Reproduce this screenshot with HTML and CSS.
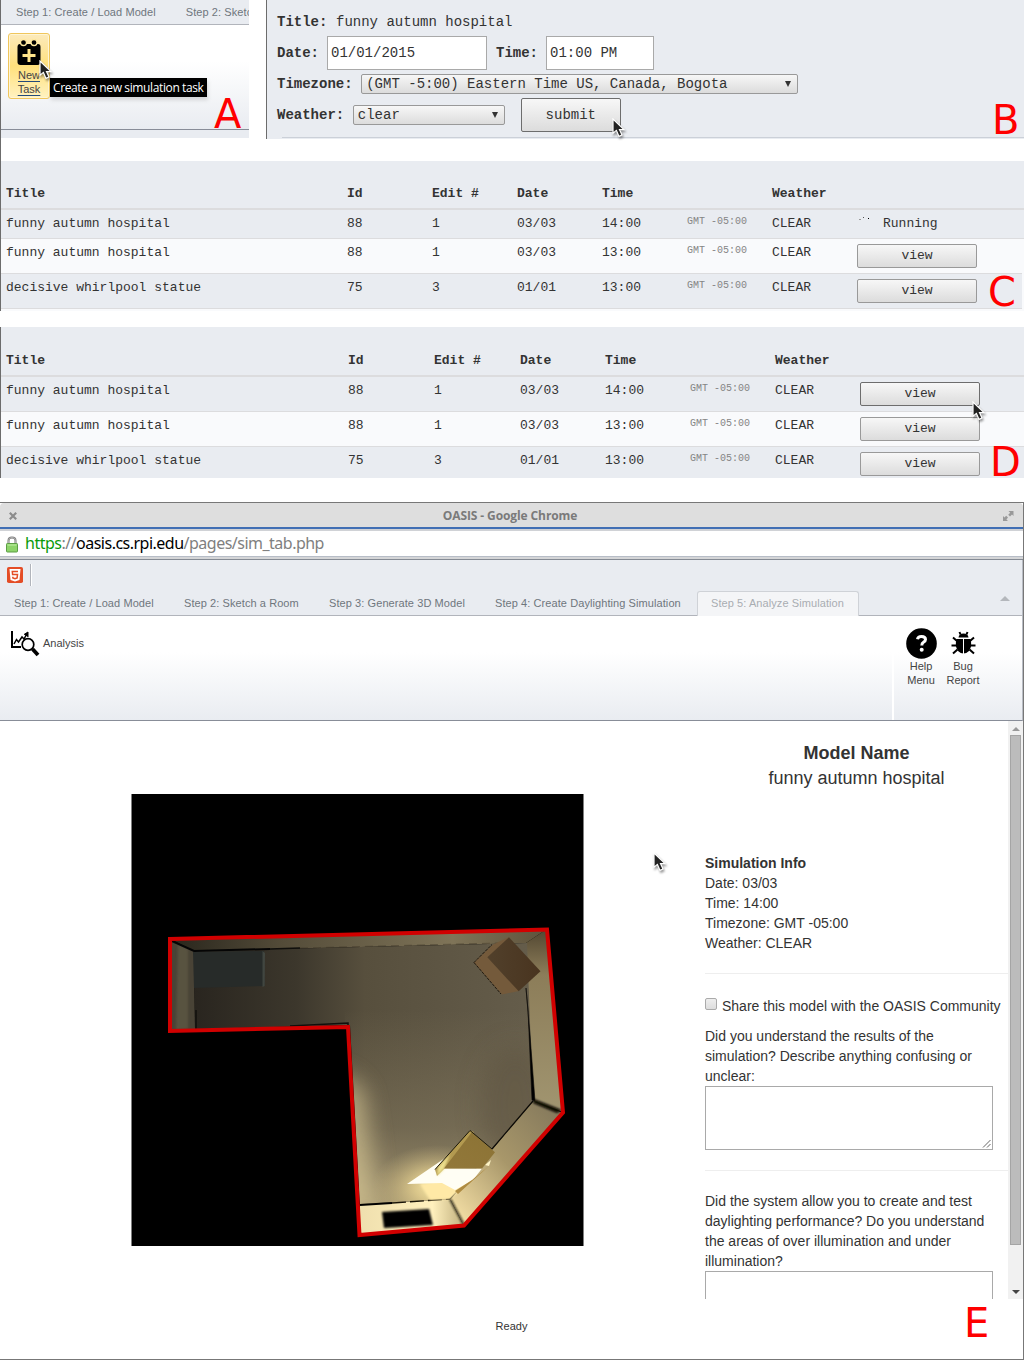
FILE: index.html
```html
<!DOCTYPE html>
<html lang="en">
<head>
<meta charset="utf-8">
<title>OASIS - Daylighting Simulation</title>
<link rel="stylesheet" href="styles.css">
</head>
<body>
<svg width="0" height="0" class="defs">
  <symbol id="cursor" viewBox="0 0 16 22">
    <path d="M1 1V15.2L4.4 12.4L7 18.4L10 17L7.5 11.6H12Z" fill="#222" stroke="#fff" stroke-width="1.2"/>
  </symbol>
</svg>

<div class="top">
  <section class="panel-a">
    <nav class="tabs-a"><span>Step 1: Create / Load Model</span><span>Step 2: Sketch a Room</span></nav>
    <div class="ribbon-a">
      <a class="new-task">
        <svg width="24" height="27" viewBox="0 0 24 27"><path d="M3 5H21Q23.500 5 23.500 8V23Q23.500 26 20.500 26H3.500Q.5 26 .5 23V8Q.5 5 3 5Z"/><g stroke="#ffe9a0" fill="#000" stroke-width="1.300"><circle cx="6.500" cy="3.500" r="3"/><circle cx="17" cy="3.500" r="3"/></g><path d="M12 10V23M5.500 16.500H18.500" stroke="#ffe48a" stroke-width="3"/></svg>
        <span>New</span><span>Task</span>
      </a>
      <div class="tooltip">Create a new simulation task</div>
    </div>
    <b class="letter la">A</b>
    <svg class="cursor c1"><use href="#cursor"/></svg>
  </section>

  <section class="panel-b">
    <div class="field f1"><b>Title:</b><span>funny autumn hospital</span></div>
    <div class="field f2"><b>Date:</b><span class="input date">01/01/2015</span><b class="time-label">Time:</b><span class="input time">01:00 PM</span></div>
    <div class="field f3"><b>Timezone:</b><span class="select tz">(GMT -5:00) Eastern Time US, Canada, Bogota<i></i></span></div>
    <div class="field f4"><b>Weather:</b><span class="select wx">clear<i></i></span><span class="btn submit">submit</span></div>
    <hr>
    <b class="letter lb">B</b>
    <svg class="cursor c2"><use href="#cursor"/></svg>
  </section>
</div>

<section class="tasks tasks-c">
  <div class="row head"><span>Title</span><span>Id</span><span>Edit #</span><span>Date</span><span>Time</span><span></span><span>Weather</span></div>
  <div class="row short"><span>funny autumn hospital</span><span>88</span><span>1</span><span>03/03</span><span>14:00</span><small>GMT -05:00</small><span>CLEAR</span><span class="running"><svg width="12" height="6" viewBox="0 0 12 6"><path d="M2 3.500h2" stroke="#999"/><path d="M6 1.500h1" stroke="#555"/><path d="M11 2.500h1" stroke="#000"/></svg>Running</span></div>
  <div class="row alt"><span>funny autumn hospital</span><span>88</span><span>1</span><span>03/03</span><span>13:00</span><small>GMT -05:00</small><span>CLEAR</span><span class="btn">view</span></div>
  <div class="row"><span>decisive whirlpool statue</span><span>75</span><span>3</span><span>01/01</span><span>13:00</span><small>GMT -05:00</small><span>CLEAR</span><span class="btn">view</span></div>
  <b class="letter lc">C</b>
</section>

<section class="tasks tasks-d">
  <div class="row head"><span>Title</span><span>Id</span><span>Edit #</span><span>Date</span><span>Time</span><span></span><span>Weather</span></div>
  <div class="row"><span>funny autumn hospital</span><span>88</span><span>1</span><span>03/03</span><span>14:00</span><small>GMT -05:00</small><span>CLEAR</span><span class="btn hover">view</span></div>
  <div class="row alt"><span>funny autumn hospital</span><span>88</span><span>1</span><span>03/03</span><span>13:00</span><small>GMT -05:00</small><span>CLEAR</span><span class="btn">view</span></div>
  <div class="row last"><span>decisive whirlpool statue</span><span>75</span><span>3</span><span>01/01</span><span>13:00</span><small>GMT -05:00</small><span>CLEAR</span><span class="btn">view</span></div>
  <b class="letter ld">D</b>
  <svg class="cursor c3"><use href="#cursor"/></svg>
</section>

<section class="window">
  <header class="titlebar">
    <svg width="8" height="8" viewBox="0 0 8 8"><path d="M.8.8L7.200 7.200M7.200.8L.8 7.200" stroke="#8c8c8c" stroke-width="2.200"/></svg>
    <b>OASIS - Google Chrome</b>
    <svg width="11" height="10" viewBox="0 0 11 10" fill="#999"><path d="M5.500 0H10.500V5L9 3.500L7 5.500L5.200 3.700L7.200 1.700Z"/><path d="M5 10H0V5L1.500 6.500L3.200 4.800L5 6.600L3.400 8.400Z"/></svg>
  </header>
  <div class="address">
    <svg width="12" height="17" viewBox="0 0 12 17"><path d="M2.500 8V4.500Q2.500 1.500 6 1.500T9.500 4.500V8" fill="none" stroke="#777" stroke-width="2"/><path d="M2.500 8V4.500Q2.500 1.500 6 1.500T9.500 4.500V8" fill="none" stroke="#ccc" stroke-width=".7"/><rect x=".5" y="7.500" width="11" height="8.500" rx=".8" fill="#8dd469" stroke="#5b9d45"/><path d="M1.500 9H10.500" stroke="#c0efa5"/></svg>
    <div class="url"><span class="secure">https</span>://<span class="host">oasis.cs.rpi.edu</span>/pages/sim_tab.php</div>
  </div>
  <div class="toolbar">
    <div class="quick">
      <svg width="16" height="16" viewBox="0 0 16 16"><rect width="16" height="16" rx="1.800" fill="#e44d26"/><path d="M2.500 2H13.500L12.500 13L8 14.500L3.500 13Z" fill="#fff"/><path d="M11 4.500H5.300L5.600 7.600H10.500L10.100 11L8 11.700L5.900 11L5.800 9.700" fill="none" stroke="#e44d26" stroke-width="1.500"/></svg>
      <i></i>
    </div>
    <nav class="tabs"><span>Step 1: Create / Load Model</span><span>Step 2: Sketch a Room</span><span>Step 3: Generate 3D Model</span><span>Step 4: Create Daylighting Simulation</span><span class="active">Step 5: Analyze Simulation</span><i></i></nav>
  </div>
  <div class="ribbon">
    <div class="analysis">
      <svg width="30" height="28" viewBox="0 0 30 28" fill="none" stroke="#000"><path d="M2 1V17H11" stroke-width="2"/><path d="M4 14L6.500 9.500L8.500 12L12 7L14 9L17 3.500" stroke-width="1.500"/><path d="M14 4.500L18 2V7" fill="#000" stroke-width="1"/><circle cx="18" cy="14.500" r="5.800" stroke-width="1.700" fill="#fff"/><path d="M22.500 19L28 25" stroke-width="3.800"/></svg>
      <span>Analysis</span>
    </div>
    <div class="tools">
      <div class="tool"><svg width="32" height="32" viewBox="0 0 32 32"><circle cx="16.500" cy="16.500" r="15.300"/><path d="M12.500 12.200Q13 9.500 16.500 9.500Q20.500 9.500 20.500 12.500Q20.500 14.200 18.500 15.200Q16.800 16.200 16.800 18.500" fill="none" stroke="#fff" stroke-width="3"/><circle cx="16.700" cy="22.800" r="2" fill="#fff"/></svg><span>Help</span><span>Menu</span></div>
      <div class="tool bug"><svg width="32" height="32" viewBox="0 0 32 32"><path d="M11.500 10.500Q12 6.500 16.500 6.500T21.500 10.500Z"/><path d="M9.500 12H23.500Q25.500 19 22 24Q16.500 29 11 24Q7.500 19 9.500 12Z"/><path d="M13.500 7.500L12.500 5M19.500 7.500L20.500 5M10 14L6 10.500M23 14L27 10.500M10.500 18.500H4.500M22.500 18.500H28.500M10.500 22.500L6 26.500M22.500 22.500L27 26.500" stroke="#000" stroke-width="2"/><path d="M16.500 12V27.500" stroke="#fff"/></svg><span>Bug</span><span>Report</span></div>
    </div>
  </div>
  <div class="content">
    <div class="stage">
      <svg class="render" width="453" height="452" viewBox="131 794 453 452">
        <defs>
          <linearGradient id="floorX" gradientUnits="userSpaceOnUse" x1="194" y1="0" x2="535" y2="0"><stop offset="0" stop-color="#29251f"/><stop offset=".3" stop-color="#3c372c"/><stop offset=".5" stop-color="#574f3d"/><stop offset="1" stop-color="#655d4b"/></linearGradient>
          <linearGradient id="floorY" gradientUnits="userSpaceOnUse" x1="0" y1="1010" x2="0" y2="1205"><stop offset="0" stop-color="#857a5f" stop-opacity="0"/><stop offset=".6" stop-color="#857a5f" stop-opacity=".55"/><stop offset="1" stop-color="#a39570"/></linearGradient>
          <linearGradient id="topWall"><stop offset="0" stop-color="#28251c"/><stop offset=".3" stop-color="#544c39"/><stop offset=".75" stop-color="#7f7458"/><stop offset="1" stop-color="#5d523b"/></linearGradient>
          <linearGradient id="rightWall" x2="0" y2="1"><stop offset="0" stop-color="#514631"/><stop offset=".25" stop-color="#8c7d59"/><stop offset="1" stop-color="#a19570"/></linearGradient>
          <linearGradient id="lowWall" x1="1" y1="0" x2="0" y2="1"><stop offset="0" stop-color="#80755a"/><stop offset=".5" stop-color="#a8976a"/><stop offset="1" stop-color="#ffe9ad"/></linearGradient>
          <linearGradient id="bottomWall"><stop offset="0" stop-color="#efdfae"/><stop offset=".7" stop-color="#fff0bd"/><stop offset="1" stop-color="#bfae7c"/></linearGradient>
          <linearGradient id="boxTop" x1="0" x2="1"><stop offset="0" stop-color="#51402b"/><stop offset="1" stop-color="#49341f"/></linearGradient>
          <linearGradient id="boxLow" x1="0" y1="1" x2="1" y2="0"><stop offset="0" stop-color="#92783a"/><stop offset="1" stop-color="#8c7335"/></linearGradient>
          <radialGradient id="glow"><stop offset="0" stop-color="#fff0ae"/><stop offset=".35" stop-color="#eed894" stop-opacity=".75"/><stop offset="1" stop-color="#c9b67e" stop-opacity="0"/></radialGradient>
          <filter id="soft"><feGaussianBlur stdDeviation="1.300"/></filter>
          <filter id="softer" x="-80%" y="-80%" width="260%" height="260%"><feGaussianBlur stdDeviation="12"/></filter>
          <clipPath id="floorClip"><path d="M194 951L527 943L533 1101L450 1199L360 1204L350 1025L195 1029Z"/></clipPath>
        </defs>
        <rect x="131.500" y="794" width="452" height="452"/>
        <path d="M170 939L547 929L526 943L194 951Z" fill="url(#topWall)"/>
        <path d="M171 940L194 951L195 1029L171 1031Z" fill="#494336"/>
        <path d="M178 944L188 949V1029L176 1030Z" fill="#595240" filter="url(#soft)"/>
        <path d="M526 943L547 929L563 1112L533 1101Z" fill="url(#rightWall)"/>
        <path d="M533 1101L563 1113L464 1226L450 1199Z" fill="url(#lowWall)"/>
        <path d="M360 1204L450 1199L464 1226L359 1235Z" fill="url(#bottomWall)"/>
        <g clip-path="url(#floorClip)">
          <rect x="190" y="940" width="350" height="270" fill="url(#floorX)"/>
          <rect x="345" y="1010" width="195" height="200" fill="url(#floorY)"/>
          <path d="M335 1070L362 1090L378 1215H335Z" fill="#d2c292" opacity=".8" filter="url(#softer)"/>
          <ellipse cx="515" cy="1105" rx="35" ry="60" fill="#5e5542" opacity=".6" filter="url(#softer)"/>
          <ellipse cx="437" cy="1187" rx="65" ry="42" fill="url(#glow)"/>
        </g>
        <path d="M172 941L194 951L270 949" fill="none" stroke="#050505" stroke-width="2"/>
        <path d="M270 949L300 948M290 1026L348 1023V1027M196 1010V1029" fill="none" stroke="#100f0c" stroke-width="1.500"/>
        <path d="M300 948L500 943" stroke="#3c3527" stroke-width=".5" stroke-dasharray="8 5"/>
        <path d="M193 952L264 951L264.500 986L194 988Z" fill="#272b29"/>
        <path d="M262.500 951L265 953L264.700 986L262.500 987Z" fill="#414640"/>
        <path d="M526 988L528 1010L532 1100L535 1101L530 1035Z" stroke="#080705" stroke-width=".6"/>
        <path d="M533 1101L492 1149M456 1192L450 1199" fill="none" stroke="#0c0a06" stroke-width="1.200"/>
        <path d="M534 1099L562 1110L557 1113L533 1103Z" fill="#080704" filter="url(#soft)"/>
        <path d="M360 1205L392 1203" stroke="#000" stroke-width="2"/>
        <path d="M392 1203L450 1199" stroke="#191407" stroke-width="1.300" stroke-dasharray="14 4"/>
        <path d="M450 1199L464 1225" stroke="#252113" stroke-width="2" filter="url(#soft)"/>
        <path d="M474 962.500L493 944.500L509 937L519 991L502 994.500Z" fill="#745a3b"/>
        <path d="M509 937.300L540.500 971.300L518.700 991.300L487.300 957.300Z" fill="url(#boxTop)"/>
        <path d="M474 962.500L492 944.500M474 962.500L501 994" stroke="#20180e" stroke-width="1" stroke-dasharray="3 1"/>
        <path d="M420 1184L474 1178L450 1199L430 1200Z" fill="#ffe9a6" filter="url(#soft)"/>
        <path d="M407 1184L448 1156L444 1168.500H482L473 1180L455 1190L442 1183Z" fill="#fffef4"/>
        <path d="M472 1180L489 1166L458 1194L455 1191Z" fill="#ae8b42"/>
        <path d="M485 1165L491 1160L489 1166Z" fill="#fff5c7"/>
        <path d="M470 1130.500L474 1132L444 1169L437 1176L435 1169.500Z" fill="#b39a50"/>
        <path d="M438 1167L450 1154L444 1169L437 1176Z" fill="#eee190" filter="url(#soft)"/>
        <path d="M472 1132L495 1152.300L482 1168.500H444Z" fill="url(#boxLow)"/>
        <path d="M435 1169.500L470 1130.500L492 1149" fill="none" stroke="#1c1809" stroke-width="1"/>
        <path d="M382 1212L429 1209L433 1225L384 1228Z" filter="url(#soft)"/>
        <path d="M170 939L547 929.500L563 1112.500L464 1225.500L359.500 1235L348 1027L170 1031Z" fill="none" stroke="#d10000" stroke-width="4"/>
      </svg>
    </div>
    <div class="info">
      <div class="model"><b>Model Name</b><span>funny autumn hospital</span></div>
      <div class="sim"><b>Simulation Info</b><span>Date: 03/03</span><span>Time: 14:00</span><span>Timezone: GMT -05:00</span><span>Weather: CLEAR</span></div>
      <div class="share"><i></i><span>Share this model with the OASIS Community</span></div>
      <p>Did you understand the results of the<br>simulation? Describe anything confusing or<br>unclear:</p>
      <div class="textarea"><svg width="9" height="9" viewBox="0 0 9 9"><path d="M1 8.500L8.500 1M5 8.500L8.500 5" stroke="#666"/></svg></div>
      <div class="rule"></div>
      <p>Did the system allow you to create and test<br>daylighting performance? Do you understand<br>the areas of over illumination and under<br>illumination?</p>
      <div class="textarea"></div>
    </div>
    <div class="scrollbar"><i class="up"></i><i class="thumb"></i><i class="down"></i></div>
  </div>
  <footer>Ready</footer>
  <b class="letter le">E</b>
  <svg class="cursor c4"><use href="#cursor"/></svg>
</section>
</body>
</html>
```
FILE: styles.css
```css
* { box-sizing: border-box; }
body { margin: 0; width: 1024px; height: 1361px; overflow: hidden; background: #fff; color: #333; font-family: "Liberation Sans", Arial, sans-serif; font-size: 14px; line-height: 20px; }
svg { display: block; flex: none; }
.defs { position: absolute; }
i { font-style: normal; }

.letter { position: absolute; color: #f00; font: 40px/40px "DejaVu Sans", sans-serif; }
.la { left: 213px; top: 94px; }
.lb { left: 725px; top: 100px; }
.lc { left: 987px; top: 111px; }
.ld { left: 989px; top: 115px; }
.le { left: 964px; top: 800px; }
.cursor { position: absolute; width: 16px; height: 22px; filter: drop-shadow(1px 2px 1px #0006); }
.c1 { left: 38px; top: 60px; }
.c2 { left: 345px; top: 118px; }
.c3 { left: 971px; top: 74px; }
.c4 { left: 653px; top: 349px; }

.top { height: 161px; display: flex; gap: 17px; border-left: 1px solid #6c6c6c; }
.panel-a { position: relative; width: 248px; height: 138px; background: #e9ecf1; }
.tabs-a { height: 25px; display: flex; gap: 30px; padding-left: 15px; overflow: hidden; white-space: nowrap; border-bottom: 1px solid #b1b4bb; color: #6f767d; font-size: 11px; line-height: 24px; letter-spacing: .08px; }
.tabs-a span { flex: none; }
.ribbon-a { position: relative; height: 105px; padding: 8px 7px; border-bottom: 1px solid #888d98; background: linear-gradient(#fff 0 35%, #e9ecf1); }
.new-task { display: flex; flex-direction: column; align-items: center; width: 42px; height: 66px; padding-top: 5px; border: 1px solid #f0c65c; border-radius: 3px; background: linear-gradient(#fceabb, #ffe07c 50%, #fff2c0); box-shadow: inset 0 0 0 1px #fff5d4; font-size: 11px; line-height: 14px; color: #444; text-decoration: underline; text-decoration-color: #244a7a; text-underline-offset: 2px; }
.new-task svg { margin-bottom: 2px; }
.tooltip { position: absolute; left: 49px; top: 53px; width: 157px; height: 19px; padding-left: 3px; background: #000; color: #fff; font: 12px/19px "Open Sans", sans-serif; white-space: nowrap; letter-spacing: -.38px; box-shadow: 1px 3px 4px #0002; }

.panel-b { position: relative; width: 758px; height: 139px; padding: 11px 0 0 10px; border-left: 1px solid #6c6c6c; background: #e9ecf1; font: 14px/20px "Liberation Mono", monospace; }
.field { display: flex; align-items: center; white-space: pre; }
.field b { margin-right: 8.600px; }
.f1 { height: 22px; }
.f2 { height: 39px; }
.f2 b { margin-right: 8px; }
.f3 { height: 23px; }
.f4 { height: 39px; }
.input { height: 34px; padding-left: 3px; border: 1px solid #a9a9a9; background: #fff; line-height: 32px; }
.date { width: 160px; margin-right: 9px; }
.time { width: 108px; }
.select, .btn { border: 1px solid #999; border-radius: 2px; background: linear-gradient(#f7f7f7, #dcdcdc); }
.select { display: flex; justify-content: space-between; align-items: center; height: 20px; padding: 0 6px 0 4px; line-height: 18px; }
.select i { border: 3.500px solid transparent; border-top: 6px solid #333; border-bottom: 0; }
.tz { width: 437px; }
.wx { width: 152px; }
.btn { display: block; text-align: center; }
.submit { width: 100px; height: 34px; margin-left: 16px; border-color: #6d6d6d; line-height: 32px; }
.panel-b hr { margin: 3px 0 0 5px; border: 0; border-top: 1px solid #cbd0d8; }

.tasks { position: relative; border-left: 1px solid #6c6c6c; font: 13px/18px "Liberation Mono", monospace; }
.row { display: grid; align-items: start; height: 35px; padding: 5px 0 0 5px; border-bottom: 1px solid #dcdcde; background: #e9ecf1; white-space: nowrap; }
.tasks-c { height: 150px; margin-bottom: 16px; background: #f9fafc; }
.tasks-c .row { width: 1021px; grid-template-columns: 341px 85px 85px 85px 85px 85px 85px 120px; }
.tasks-d { height: 151px; }
.tasks-d .row { grid-template-columns: 342px 86px 86px 85px 85px 85px 85px 120px; }
.tasks .head { width: auto; height: 49px; padding-top: 24px; border-bottom: 2px solid #dcdcde; font-weight: bold; }
.tasks-d .head { height: 50px; padding-top: 25px; }
.tasks .short { width: auto; height: 29px; }
.tasks .alt { background: #f9fafc; }
.row small { font-size: 10px; line-height: 14px; color: #858585; }
.row .btn { width: 120px; height: 24px; line-height: 22px; }
.row .hover { border-color: #6d6d6d; }
.running { display: flex; gap: 14px; }
.running svg { margin-top: 1px; }
.tasks-d .last { height: 31px; border: 0; }

.window { position: relative; height: 858px; margin-top: 24px; border-top: 1px solid #777; border-right: 1px solid #777; border-bottom: 1px solid #777; }
.titlebar { display: flex; align-items: center; justify-content: space-between; height: 26px; padding: 2px 9px 0 9px; border-bottom: 2px solid #416fb4; border-radius: 4px 4px 0 0; background: #dedede; color: #7a7a7a; font: 12px/22px "Open Sans", sans-serif; letter-spacing: -.1px; }
.address { display: flex; align-items: center; gap: 7px; height: 31px; padding: 0 0 0 6px; border-top: 2px solid #d0d2d6; border-bottom: 1px solid #858b94; background: #fff; box-shadow: inset 0 -2px #d4d5d7, inset 0 -3px #b7bdc7; color: #808080; font: 16px/26px "Noto Sans", sans-serif; }
.address svg { margin-bottom: 2px; }
.url { padding-bottom: 4px; letter-spacing: -.51px; }
.secure { color: #0a9a0a; }
.host { color: #000; }
.toolbar { height: 56px; border-bottom: 1px solid #b1b4bb; border-right: 1px solid #b8bcc4; background: #e9ecf1; }
.quick { display: flex; align-items: center; gap: 7px; height: 31px; padding: 0 0 1px 7px; }
.quick i { width: 2px; height: 22px; border-left: 1px solid #b1b4bb; background: #fff; }
.tabs { display: flex; height: 25px; color: #6f767d; font-size: 11px; line-height: 24px; letter-spacing: .08px; white-space: nowrap; }
.tabs span { width: 170px; padding-left: 14px; }
.tabs span:nth-child(2) { width: 145px; }
.tabs span:nth-child(3) { width: 166px; }
.tabs span:nth-child(4) { width: 216px; }
.tabs .active { width: 162px; padding-left: 13px; border: 1px solid #cfd2d7; border-bottom: 0; border-radius: 3px 3px 0 0; background: #f4f5f7; color: #a9adb2; line-height: 22px; }
.tabs i { width: 0; height: 0; margin: 5px 0 0 141px; border: 5px solid transparent; border-top: 0; border-bottom-color: #b4b7bc; }
.ribbon { display: flex; justify-content: space-between; height: 105px; border-bottom: 1px solid #888d98; border-right: 1px solid #b8bcc4; background: linear-gradient(#fff 0 35%, #e9ecf1); color: #444; font-size: 11px; line-height: 14px; }
.analysis { display: flex; gap: 3px; padding: 14px 0 0 10px; }
.analysis span { padding-top: 6px; }
.tools { display: flex; gap: 10px; width: 130px; padding: 11px 0 0 11px; border-left: 2px solid #fff; }
.tool { display: flex; flex-direction: column; align-items: center; width: 32px; }
.tool span { flex: none; }
.content { display: flex; height: 578px; overflow: hidden; }
.stage { width: 705px; padding: 73px 0 0 131px; }
.info { width: 303px; padding-top: 20px; white-space: nowrap; }
.model { display: flex; flex-direction: column; align-items: center; height: 112px; font-size: 18px; line-height: 25px; }
.sim { display: flex; flex-direction: column; height: 121px; border-bottom: 1px solid #eee; }
.share { display: flex; gap: 5px; height: 52px; padding-top: 22px; }
.share i { width: 12px; height: 12px; margin-top: 2px; border: 1px solid #aaa; border-radius: 2px; background: linear-gradient(#eee, #ddd); }
.info p { margin: 0; }
.textarea { display: flex; align-items: flex-end; justify-content: flex-end; width: 288px; height: 64px; padding: 1px; border: 1px solid #a9a9a9; background: #fff; }
.rule { height: 41px; background: linear-gradient(#eee, #eee) 0 20px / 100% 1px no-repeat; }
.scrollbar { display: flex; flex-direction: column; align-items: center; width: 15px; background: #f1f1f1; }
.up { margin: 6px 0 4px; border: 4px solid transparent; border-top: 0; border-bottom-color: #999; }
.thumb { width: 11px; height: 510px; border: 1px solid #a5a5a5; background: #bcbcbc; }
.down { margin-top: 45px; border: 4px solid transparent; border-bottom: 0; border-top-color: #444; }
footer { height: 59px; padding: 17px 0 0; text-align: center; font-size: 11px; color: #333; }
```
